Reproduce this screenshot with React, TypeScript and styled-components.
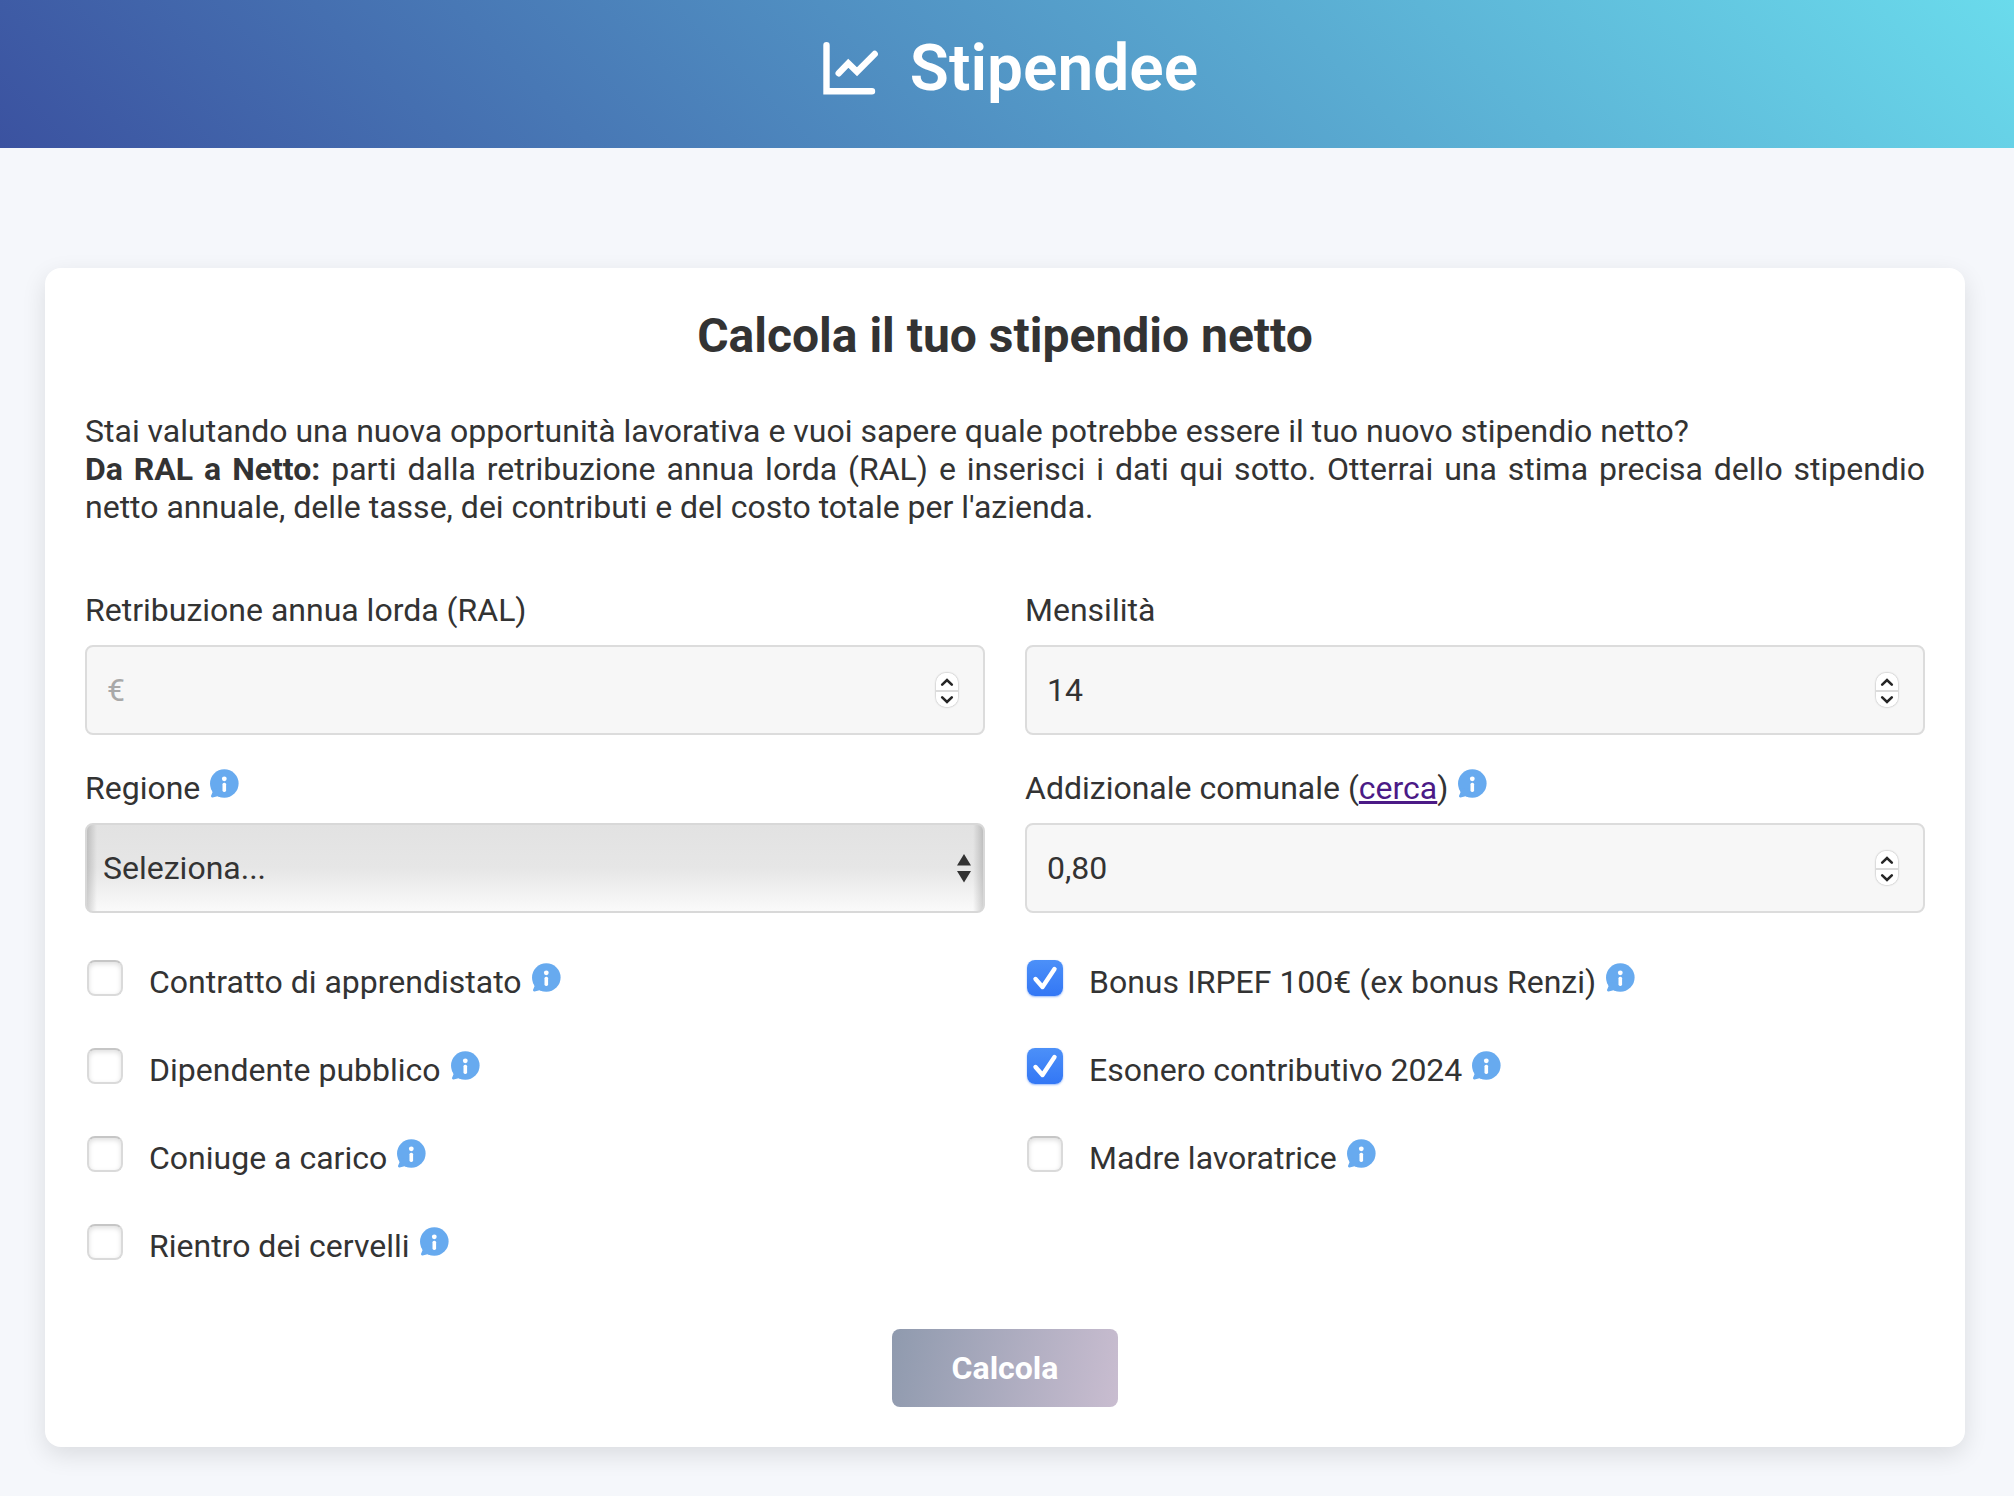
import React, { useState } from "react";
import styled, { createGlobalStyle } from "styled-components";

const GlobalStyle = createGlobalStyle`
  *, *::before, *::after { box-sizing: border-box; }
  body {
    margin: 0;
    background: #f5f7fb;
    color: #333;
    font-family: Roboto, "Liberation Sans", sans-serif;
    font-size: 32px;
    line-height: 38px;
  }
  button, input, select { font: inherit; color: inherit; margin: 0; }
`;

const Header = styled.header`
  display: flex;
  justify-content: center;
  align-items: flex-start;
  gap: 30px;
  padding: 31px 40px 41px;
  background: linear-gradient(45deg, #3b52a0, #6adbec);
  color: #fff;
`;

const Logo = styled.svg`
  width: 64px;
  height: 76px;
  flex: none;
`;

const Brand = styled.h1`
  margin: 0;
  font-size: 64px;
  line-height: 76px;
  font-weight: 600;
`;

const Main = styled.main`
  padding: 120px 49px 50px 45px;
`;

const Card = styled.section`
  padding: 40px;
  border-radius: 16px;
  background: #fff;
  box-shadow: 0 8px 24px rgba(0, 0, 0, 0.11);
`;

const Title = styled.h2`
  margin: 0 0 48px;
  font-size: 48px;
  line-height: 56px;
  font-weight: 700;
  text-align: center;
`;

const Intro = styled.p`
  margin: 0 0 65px;
  text-align: justify;
`;

const Fields = styled.div`
  display: grid;
  grid-template-columns: 1fr 1fr;
  gap: 34px 40px;
`;

const Field = styled.div`
  display: flex;
  flex-direction: column;
  gap: 16px;
`;

const LabelRow = styled.div`
  display: flex;
  align-items: flex-start;
  gap: 10px;
`;

const Link = styled.a`
  color: #4b1a86;
  text-decoration: underline;
`;

const InfoSvg = styled.svg`
  width: 29px;
  height: 29px;
  flex: none;
  display: block;
`;

const Stack = styled.div`
  display: grid;
  align-items: center;
  > * { grid-area: 1 / 1; }
`;

const TextInput = styled.input`
  width: 100%;
  height: 90px;
  padding: 0 64px 0 20px;
  border: 2px solid #dcdcdc;
  border-radius: 8px;
  background: #f7f7f7;
  outline: none;
  &::placeholder { color: #a9a9a9; opacity: 1; }
`;

const Stepper = styled.div`
  justify-self: end;
  display: grid;
  grid-template-rows: 1fr 1fr;
  width: 22px;
  height: 34px;
  margin-right: 27px;
  border-radius: 10px;
  background: #fff;
  box-shadow: 0 0 2px rgba(0, 0, 0, 0.4);
  overflow: hidden;
`;

const StepButton = styled.button`
  display: grid;
  place-items: center;
  padding: 0;
  border: 0;
  background: #fff;
  & + & { border-top: 2px solid #dcdcdc; }
`;

const Select = styled.select`
  appearance: none;
  width: 100%;
  height: 90px;
  padding: 0 48px 0 16px;
  border: 2px solid #d8d8d8;
  border-radius: 8px;
  outline: none;
  background:
    linear-gradient(90deg, rgba(0, 0, 0, 0.16), transparent 10px, transparent calc(100% - 10px), rgba(0, 0, 0, 0.16)),
    linear-gradient(#e2e2e2, #e6e6e6 50%, #fafafa);
`;

const SelectArrows = styled.svg`
  justify-self: end;
  width: 14px;
  height: 30px;
  margin-right: 14px;
  pointer-events: none;
`;

const Options = styled.div`
  display: grid;
  grid-template-columns: 1fr 1fr;
  column-gap: 40px;
  margin: 47px 0 64px;
`;

const OptionColumn = styled.div`
  display: flex;
  flex-direction: column;
  gap: 47px;
`;

const Option = styled.div`
  display: flex;
  align-items: flex-start;
  gap: 26px;
  padding-left: 2px;
`;

const OptionText = styled(LabelRow)`
  padding-top: 3px;
`;

const Checkbox = styled.input`
  appearance: none;
  width: 36px;
  height: 36px;
  border: 2px solid #dadada;
  border-top-color: #c6c6c6;
  border-radius: 8px;
  background: #fff;
  box-shadow: inset 0 2px 5px rgba(0, 0, 0, 0.13);
  & + svg { visibility: hidden; }
  &:checked {
    border: 0;
    background: linear-gradient(#4c90f8, #3377f5);
    box-shadow: 0 1px 2px rgba(51, 119, 245, 0.5);
  }
  &:checked + svg { visibility: visible; }
`;

const Tick = styled.svg`
  width: 36px;
  height: 36px;
  pointer-events: none;
`;

const Actions = styled.div`
  display: flex;
  justify-content: center;
`;

const Submit = styled.button`
  padding: 20px 60px;
  border: 0;
  border-radius: 8px;
  background: linear-gradient(100deg, #8f9aae, #c9bdd0);
  color: #fff;
  font-weight: 700;
`;

const Info = () => (
  <InfoSvg viewBox="0 0 29 29" aria-hidden="true">
    <circle cx="14.3" cy="14.5" r="14.3" fill="#67aaef" />
    <path d="M1.2 19 L2.6 23 L1 27 Q0.8 28.6 2.6 28.4 L7.5 27.2 L11 28.3 L12 20 Z" fill="#67aaef" />
    <circle cx="14.3" cy="9.8" r="2.4" fill="#fff" />
    <rect x="12.5" y="13.7" width="3.6" height="9.2" rx="1.6" fill="#fff" />
  </InfoSvg>
);

const Chevron = ({ up }: { up?: boolean }) => (
  <svg width="14" height="10" viewBox="0 0 14 10" aria-hidden="true">
    <path
      d={up ? "M2.2 7.6 L7 3 L11.8 7.6" : "M2.2 2.4 L7 7 L11.8 2.4"}
      fill="none"
      stroke="#262626"
      strokeWidth="2.6"
      strokeLinecap="round"
    />
  </svg>
);

type NumberFieldProps = {
  id: string;
  label: React.ReactNode;
  info?: boolean;
  initial?: string;
  placeholder?: string;
  step: number;
  decimals?: number;
};

function NumberField({ id, label, info, initial = "", placeholder, step, decimals = 0 }: NumberFieldProps) {
  const [value, setValue] = useState(initial);
  const change = (delta: number) => {
    const current = parseFloat(value.replace(",", ".")) || 0;
    setValue(Math.max(0, current + delta).toFixed(decimals).replace(".", ","));
  };
  return (
    <Field>
      <LabelRow>
        <label htmlFor={id}>{label}</label>
        {info && <Info />}
      </LabelRow>
      <Stack>
        <TextInput
          id={id}
          inputMode="decimal"
          placeholder={placeholder}
          value={value}
          onChange={(e) => setValue(e.target.value)}
        />
        <Stepper>
          <StepButton type="button" aria-label="Aumenta" onClick={() => change(step)}>
            <Chevron up />
          </StepButton>
          <StepButton type="button" aria-label="Diminuisci" onClick={() => change(-step)}>
            <Chevron />
          </StepButton>
        </Stepper>
      </Stack>
    </Field>
  );
}

const optionColumns = [
  [
    { id: "apprendistato", text: "Contratto di apprendistato", on: false },
    { id: "pubblico", text: "Dipendente pubblico", on: false },
    { id: "coniuge", text: "Coniuge a carico", on: false },
    { id: "rientro", text: "Rientro dei cervelli", on: false },
  ],
  [
    { id: "bonus", text: "Bonus IRPEF 100€ (ex bonus Renzi)", on: true },
    { id: "esonero", text: "Esonero contributivo 2024", on: true },
    { id: "madre", text: "Madre lavoratrice", on: false },
  ],
];

export default function App() {
  return (
    <>
      <GlobalStyle />
      <Header>
        <Logo viewBox="0 0 64 76" fill="none" stroke="#fff" strokeWidth="6.4" strokeLinecap="round" aria-hidden="true">
          <path d="M10.5 14.2 V60.2 H56" />
          <path d="M22.7 42.3 L32.3 32.3 L41 40.7 L58.7 23" />
        </Logo>
        <Brand>Stipendee</Brand>
      </Header>
      <Main>
        <Card>
          <Title>Calcola il tuo stipendio netto</Title>
          <Intro>
            Stai valutando una nuova opportunità lavorativa e vuoi sapere quale potrebbe essere il tuo nuovo stipendio
            netto?
            <br />
            <strong>Da RAL a Netto:</strong> parti dalla retribuzione annua lorda (RAL) e inserisci i dati qui sotto.
            Otterrai una stima precisa dello stipendio netto annuale, delle tasse, dei contributi e del costo totale per
            l'azienda.
          </Intro>
          <form onSubmit={(e) => e.preventDefault()}>
            <Fields>
              <NumberField id="ral" label="Retribuzione annua lorda (RAL)" placeholder="€" step={1000} />
              <NumberField id="mensilita" label="Mensilità" initial="14" step={1} />
              <Field>
                <LabelRow>
                  <label htmlFor="regione">Regione</label>
                  <Info />
                </LabelRow>
                <Stack>
                  <Select id="regione" defaultValue="">
                    <option value="">Seleziona...</option>
                  </Select>
                  <SelectArrows viewBox="0 0 14 30" fill="#333" aria-hidden="true">
                    <path d="M7 1 L14 12.5 H0 Z M0 18 H14 L7 29.5 Z" />
                  </SelectArrows>
                </Stack>
              </Field>
              <NumberField
                id="addizionale"
                label={
                  <>
                    Addizionale comunale (<Link href="#cerca">cerca</Link>)
                  </>
                }
                info
                initial="0,80"
                step={0.01}
                decimals={2}
              />
            </Fields>
            <Options>
              {optionColumns.map((column, i) => (
                <OptionColumn key={i}>
                  {column.map((o) => (
                    <Option key={o.id}>
                      <Stack>
                        <Checkbox type="checkbox" id={o.id} defaultChecked={o.on} />
                        <Tick viewBox="0 0 36 36" aria-hidden="true">
                          <path
                            d="M8.5 19 L15.5 27 L27.5 9"
                            fill="none"
                            stroke="#fff"
                            strokeWidth="4.4"
                            strokeLinecap="round"
                            strokeLinejoin="round"
                          />
                        </Tick>
                      </Stack>
                      <OptionText>
                        <label htmlFor={o.id}>{o.text}</label>
                        <Info />
                      </OptionText>
                    </Option>
                  ))}
                </OptionColumn>
              ))}
            </Options>
            <Actions>
              <Submit type="submit">Calcola</Submit>
            </Actions>
          </form>
        </Card>
      </Main>
    </>
  );
}
